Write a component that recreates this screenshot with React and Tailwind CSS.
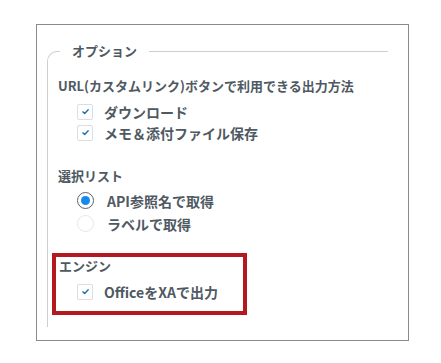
import React from 'react';

const font = { fontFamily: '"Noto Sans CJK JP", "Noto Sans", sans-serif' };

const Checkbox = ({ label }) => (
  <div className="flex h-[21px] items-center pl-[19px]">
    <span className="flex h-4 w-4 items-center justify-center rounded-[2px] border border-[#d8dde6] bg-white">
      <svg viewBox="0 0 10 10" className="h-[9px] w-[9px]" fill="none">
        <path d="M2 5.4 L4.1 7.3 L8 3" stroke="#1a6fb3" strokeWidth="1.5" strokeLinecap="round" strokeLinejoin="round" />
      </svg>
    </span>
    <span className="ml-[11px] text-[14px] font-semibold leading-[18px] text-[#4f5962]">{label}</span>
  </div>
);

const Radio = ({ label, checked }) => (
  <div className="flex h-[23px] items-center pl-[19px]">
    <span
      className={
        checked
          ? 'flex h-[17px] w-[17px] items-center justify-center rounded-full border border-[#5c636b] bg-white'
          : 'flex h-[17px] w-[17px] items-center justify-center rounded-full border border-[#e4e7eb] bg-white'
      }
    >
      {checked && <span className="h-[9px] w-[9px] rounded-full bg-[#1589ee]" />}
    </span>
    <span className="ml-[13px] text-[14px] font-semibold leading-[18px] text-[#4f5962]">{label}</span>
  </div>
);

const SectionTitle = ({ children, className = '' }) => (
  <div className={`text-[13px] font-semibold leading-[18px] text-[#4f5962] ${className}`}>{children}</div>
);

export default function App() {
  return (
    <div className="h-[363px] w-[441px] bg-white pt-[24px] pl-[36px]" style={font}>
      <div className="w-[373px] border border-[#8a8a8a] bg-white pt-[17px] pr-[20px] pb-[13px] pl-[10px]">
        <fieldset className="rounded-tl-[10px] border-t border-l border-[#cfcfcf] pl-[10px]">
          <legend className="ml-[2px] px-[12px] text-[13px] font-bold leading-[18px] text-[#4f5962]">
            オプション
          </legend>

          <SectionTitle className="mt-[17px]">URL(カスタムリンク)ボタンで利用できる出力方法</SectionTitle>
          <div className="mt-[6px] flex flex-col">
            <Checkbox label="ダウンロード" />
            <Checkbox label="メモ＆添付ファイル保存" />
          </div>

          <SectionTitle className="mt-[24px]">選択リスト</SectionTitle>
          <div className="mt-[4px] flex flex-col">
            <Radio label="API参照名で取得" checked />
            <Radio label="ラベルで取得" />
          </div>

          <div className="mt-[18px] mb-[12px] ml-[-6px] w-[195px] border-4 border-[#b3191f] pb-[9px] pl-[3px]">
            <SectionTitle>エンジン</SectionTitle>
            <div className="mt-[6px] ml-[-1px]">
              <Checkbox label="OfficeをXAで出力" />
            </div>
          </div>
        </fieldset>
      </div>
    </div>
  );
}
